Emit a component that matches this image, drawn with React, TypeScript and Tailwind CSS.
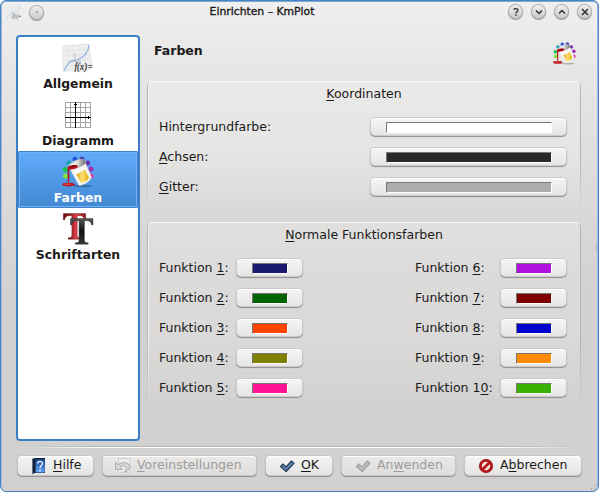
import type { ReactNode } from "react";

function Key({ children }: { children: ReactNode }) {
  return (
    <span className="underline decoration-1 underline-offset-2 [text-decoration-skip-ink:none]">
      {children}
    </span>
  );
}

function PlotIcon({ className }: { className: string }) {
  return (
    <svg viewBox="0 0 32 32" className={`overflow-visible ${className}`}>
      <path d="M1 4 27 2l3 24-6 3H1z" fill="#eeeff0" stroke="#d6d8da" strokeWidth=".6" />
      <path d="M1 9l27-2M1 14l28-2M1 19l28-2M1 24l28-2M6 4v24M11 3v25M17 3l1 25M22 2l2 25" stroke="#d9dbde" strokeWidth=".5" fill="none" />
      <path d="M13 11v9M7 19h12" stroke="#a9adb2" strokeWidth=".8" />
      <path d="M2 29C7 17 11 20 17 17S26 11 27 3" fill="none" stroke="#8fb3e2" strokeWidth="1.2" />
      <text x="12.500" y="27.500" fontSize="11" fontStyle="italic" fontWeight="400" fontFamily="Liberation Serif, serif" textLength="18.500" lengthAdjust="spacingAndGlyphs" fill="#222" stroke="#222" strokeWidth=".2">f(x)=</text>
    </svg>
  );
}

function GridIcon() {
  return (
    <svg viewBox="0 0 32 32" className="size-8" shapeRendering="crispEdges">
      <path d="M3.500 3v26M8.500 3v26M18.500 3v26M23.500 3v26M28.500 3v26M3 3.500h26M3 8.500h26M3 13.500h26M3 23.500h26M3 28.500h26" stroke="#a3a3a3" fill="none" />
      <path d="M13.500 3v26M3 18.500h26M12 5.500h3M26.500 17v3" stroke="#000" fill="none" />
    </svg>
  );
}

function PaintIcon({ id, className }: { id: string; className: string }) {
  const dots: [number, number, string][] = [
    [3.500, 20, "#7ee23a"], [3.200, 13.500, "#16c552"], [7, 7, "#1a9fb4"], [13, 3.200, "#2455d8"],
    [20, 3, "#4b3fb2"], [25.500, 7, "#6732b0"], [29, 13, "#a42fb8"], [29, 20, "#e63394"],
  ];
  return (
    <svg viewBox="0 0 32 32" className={className}>
      <defs>
        <linearGradient id={id + "metal"} x1="0" x2="1">
          <stop offset="0" stopColor="#f6f6f6" />
          <stop offset=".55" stopColor="#ddd" />
          <stop offset="1" stopColor="#666" />
        </linearGradient>
        <linearGradient id={id + "gold"} x1="0" x2="1">
          <stop offset="0" stopColor="#d99d00" />
          <stop offset=".45" stopColor="#ffe27a" />
          <stop offset="1" stopColor="#e3a800" />
        </linearGradient>
      </defs>
      {dots.map(([x, y, c]) => <circle key={c} cx={x} cy={y} r="2.500" fill={c} />)}
      <ellipse cx="21" cy="30" rx="9.500" ry="1.300" fill="#000" opacity=".25" />
      <path d="M8 13 23 6l6.500 15c-1 4-7 8-12.500 8.500z" fill="#f8f8f7" stroke="#c8c8c8" strokeWidth=".4" />
      <path d="m14.500 18.500 8.500-5 4 8.500c-1.500 2.500-4.500 4.500-8 5z" fill={`url(#${id}gold)`} />
      <path d="M5.500 11.500C7 7 16 2 21 3.500s2.500 5-2 7-12 4.500-13.500 1z" fill={`url(#${id}metal)`} stroke="#bbb" strokeWidth=".6" />
      <path d="M5.500 11C8 9 13 8.500 15.500 9.500c1.500.8 0 2.300-2 3s-4.500 1-6.200 1V26H5.800z" fill="#b5121b" />
      <path d="M7 11l6.500-1" stroke="#700008" strokeWidth="1" />
      <ellipse cx="6.500" cy="28.500" rx="6.500" ry="1.900" fill="#b9181c" />
      <path d="M2.500 28.200h6" stroke="#ef7777" strokeWidth=".7" />
    </svg>
  );
}

function FontsIcon() {
  const glyph = "M0 0h21v6h-1.200c-.8-3-1.800-4-4.800-4h-2v18c0 2 .8 2.500 3.500 2.700V24H4.500v-1.300C7.200 22.500 8 22 8 20V2H6C3 2 2 3 1.200 6H0z";
  return (
    <svg viewBox="0 0 32 32" className="size-8">
      <defs>
        <linearGradient id="redT" x1="0" x2="1"><stop offset=".3" stopColor="#7d0f18" /><stop offset=".55" stopColor="#e13d48" /><stop offset="1" stopColor="#8a1720" /></linearGradient>
        <linearGradient id="blackT" x2="0" y2="1"><stop offset="0" stopColor="#555" /><stop offset=".5" stopColor="#111" /><stop offset="1" stopColor="#333" /></linearGradient>
      </defs>
      <path d={glyph} transform="translate(1.300 .5) scale(1.070)" fill="url(#redT)" stroke="#742a30" strokeWidth=".4" />
      <path d={glyph} transform="translate(8.500 5.500) scale(1.070)" fill="url(#blackT)" stroke="#333" strokeWidth=".4" />
    </svg>
  );
}

function HelpBookIcon() {
  return (
    <svg viewBox="0 0 16 16" className="size-4">
      <defs><linearGradient id="book" x2="0" y2="1"><stop offset="0" stopColor="#1d4b92" /><stop offset="1" stopColor="#5fa3f5" /></linearGradient></defs>
      <path d="M1 1 4 0h10v15H4l-3 1z" fill="#0e2038" />
      <path d="M1.500 1.500v14" stroke="#8796a8" strokeWidth=".7" />
      <path d="M4.500 1.300h9.300v13.200H4.500z" fill="url(#book)" />
      <path d="M6.500 5.500c.3-3 5.200-2.800 5 .1C11.400 7.500 9 7.500 9 10.200" fill="none" stroke="#e5f0ff" strokeWidth="1.300" />
      <circle cx="9" cy="12.500" r=".9" fill="#e5f0ff" />
    </svg>
  );
}

function ResetIcon() {
  return (
    <svg viewBox="0 0 16 16" className="size-4">
      <path d="M3.500.5H15v14H4.500l-1-1z" fill="#ececec" stroke="#cfcfcf" />
      <path d="M.5 4.500v7h7L5.300 9.300C7 7.500 10 7.500 11 9.500c.7 1.500 0 3.200-1.500 4 4 0 6-2.700 5.200-5.500C13.500 4 7 3.200 3.200 7z" fill="#d6d6d6" stroke="#a9a9a9" strokeWidth=".9" />
    </svg>
  );
}

function CheckIcon({ off }: { off?: boolean }) {
  return (
    <svg viewBox="0 0 16 16" className="size-4">
      <path d="M1.500 8.500 4 6l3 2.800L12.500 3 15 5.300 7.200 13.500z" fill={off ? "#bcbcbc" : "#5c82ac"} stroke={off ? "#a0a0a0" : "#233c58"} strokeWidth="1.100" strokeLinejoin="round" />
    </svg>
  );
}

function CancelIcon() {
  return (
    <svg viewBox="0 0 16 16" className="size-4">
      <circle cx="8" cy="8" r="5.500" fill="#f6e2e2" stroke="#b51414" strokeWidth="2.600" />
      <path d="m4.500 11.500 7-7" stroke="#b51414" strokeWidth="2.600" />
      <circle cx="8" cy="8" r="6.800" fill="none" stroke="#7e0808" strokeWidth=".5" />
    </svg>
  );
}

function RoundButton({ children }: { children: ReactNode }) {
  return (
    <span className="flex size-[13px] items-center justify-center rounded-full bg-linear-to-b from-[#f0f0f0] to-[#cbcbca] shadow-[0_0_0_1px_#b0b0af,0_1px_1px_1px_#9b9b9a]">
      <svg viewBox="0 0 14 14" className="size-[14px] shrink-0" fill="none" stroke="#303030" strokeWidth="1.500">{children}</svg>
    </span>
  );
}

function Swatch({ color, wide }: { color: string; wide?: boolean }) {
  return (
    <button className={`${wide ? "w-[195px]" : "w-[65px]"} mb-px flex h-[17px] items-end rounded-[4px] bg-linear-to-b from-[#f5f5f5] to-[#e6e5e4] pr-[14px] pb-[2px] pl-[15px] shadow-[0_0_0_1px_#cbcac9,0_1px_1px_1px_#8f8e8d,inset_0_1px_0_#fff]`}>
      <span className="block h-[11px] w-full border border-t-[#777] border-r-white border-b-white border-l-[#777]" style={{ backgroundColor: color }} />
    </button>
  );
}

function Group({ title, className, children }: { title: ReactNode; className: string; children: ReactNode }) {
  return (
    <section className={`relative w-[434px] ${className}`}>
      <div className="pointer-events-none absolute inset-0 rounded-t-[5px] border border-b-0 border-t-white/80 border-r-[#b5b4b3] border-l-[#b5b4b3] bg-white/20 shadow-[inset_1px_0_0_#f3f3f2,1px_0_0_#efefee] [mask-image:linear-gradient(to_bottom,black_60%,transparent)]" />
      <h2 className="relative pt-[5px] text-center leading-4">{title}</h2>
      {children}
    </section>
  );
}

function FunctionRow({ n, color }: { n: number; color: string }) {
  return (
    <div className="flex h-[30px] items-center">
      <span className={n > 5 ? "w-[86px]" : "w-[78px]"}>
        Funktion {n === 10 ? <>1<Key>0</Key></> : <Key>{n}</Key>}:
      </span>
      <Swatch color={color} />
    </div>
  );
}

function DialogButton({ className, icon, off, children }: { className: string; icon: ReactNode; off?: boolean; children: ReactNode }) {
  return (
    <button className={`flex h-[19px] items-center gap-[6px] rounded-[4px] bg-linear-to-b whitespace-nowrap shadow-[0_0_0_1px_#c6c5c4,0_1px_1px_1px_#8f8e8d,inset_0_1px_0_#fff] ${off ? "from-[#eae9e8] to-[#dfdedd] text-[#9c9b9a]" : "from-[#f5f5f5] to-[#e5e4e3]"} ${className}`}>
      {icon}
      <span>{children}</span>
    </button>
  );
}

function NavItem({ icon, label, active }: { icon: ReactNode; label: string; active?: boolean }) {
  return (
    <div className={`flex h-[57px] flex-col items-center pt-[5px] text-[12.4px] leading-4 font-bold ${active ? "rounded-[2px] bg-linear-to-b from-[#61acfc] to-[#4288d2] text-white shadow-[inset_0_0_0_1px_#3f82c8,inset_0_0_0_2px_#70b2f4]" : ""}`}>
      {icon}
      <span className="pt-[2px]">{label}</span>
    </div>
  );
}

const left = ["#191970", "#006400", "#ff4500", "#808000", "#ff1493"];
const right = ["#b010dd", "#800000", "#0000cd", "#ff8c00", "#3cb000"];

export default function App() {
  return (
    <div className="h-[492px] w-[599px] bg-white font-['DejaVu_Sans',sans-serif] text-[12.5px] text-[#1b1918]">
      <div className="relative flex h-full flex-col overflow-hidden rounded-[6px] border border-[#4a83bd] bg-[linear-gradient(to_bottom,#efefef_0,#e4e4e3_90px,#d9d8d7_220px,#d2d1cf_300px,#d2d1cf_100%)] shadow-[inset_0_1px_0_#78a9da,inset_1px_0_0_#9dbbdc,inset_-1px_0_0_#9dbbdc]">
        <header className="flex h-[34px] items-start pt-[3px]">
          <div className="flex w-[160px] items-center gap-[8px] pl-[5px]">
            <PlotIcon className="size-4 opacity-60" />
            <RoundButton><circle cx="7" cy="7" r=".8" fill="#555" stroke="none" /></RoundButton>
          </div>
          <h1 className="flex-1 pr-[146px] text-center text-[10.8px] leading-4 [-webkit-text-stroke:0.35px_#1b1918]">Einrichten – KmPlot</h1>
          <div className="flex gap-[10px] pt-px pr-[7px]">
            <RoundButton><path d="M5 5c.2-2 4.200-2 4 .2C8.900 6.500 7 6.500 7 8.400M7 9.600v1.300" strokeWidth="1.300" /></RoundButton>
            <RoundButton><path d="m4 5.500 3 3 3-3" /></RoundButton>
            <RoundButton><path d="m4 8.500 3-3 3 3" /></RoundButton>
            <RoundButton><path d="m4 4 6 6m0-6-6 6" /></RoundButton>
          </div>
        </header>
        <div className="flex h-[406px] pl-[15px]">
          <nav className="h-[406px] w-[124px] rounded-[4px] border-2 border-[#3c7fc6] bg-white">
            <NavItem icon={<PlotIcon className="size-8" />} label="Allgemein" />
            <NavItem icon={<GridIcon />} label="Diagramm" />
            <NavItem icon={<PaintIcon id="nav" className="size-8" />} label="Farben" active />
            <NavItem icon={<FontsIcon />} label="Schriftarten" />
          </nav>
          <main className="flex flex-col pl-[7px]">
            <div className="flex h-[46px] items-start justify-between pr-[5px] pl-[7px]">
              <span className="pt-[8px] leading-4 font-bold">Farben</span>
              <PaintIcon id="head" className="mt-[7px] size-[23px]" />
            </div>
            <Group title={<><Key>K</Key>oordinaten</>} className="h-[130px]">
              <div className="relative flex flex-col pt-[10px] pr-[15px] pl-[12px]">
                <div className="flex h-[30px] items-center justify-between">Hintergrundfarbe:<Swatch wide color="#ffffff" /></div>
                <div className="flex h-[30px] items-center justify-between"><span><Key>A</Key>chsen:</span><Swatch wide color="#292929" /></div>
                <div className="flex h-[30px] items-center justify-between"><span><Key>G</Key>itter:</span><Swatch wide color="#adadad" /></div>
              </div>
            </Group>
            <Group title={<><Key>N</Key>ormale Funktionsfarben</>} className="mt-[11px] h-[190px]">
              <div className="relative flex justify-between pt-[10px] pr-[15px] pl-[12px]">
                <div>{left.map((c, i) => <FunctionRow key={c} n={i + 1} color={c} />)}</div>
                <div>{right.map((c, i) => <FunctionRow key={c} n={i + 6} color={c} />)}</div>
              </div>
            </Group>
          </main>
        </div>
        <div className="mx-[17px] mt-[5px] h-[2px] shrink-0 bg-linear-to-b from-[#b5b4b3] from-50% to-white to-50% [mask-image:linear-gradient(to_right,transparent,black_15%,black_85%,transparent)]" />
        <footer className="flex pt-[8px] pl-[17px]">
          <DialogButton className="w-[75px] pl-[13px]" icon={<HelpBookIcon />}><Key>H</Key>ilfe</DialogButton>
          <DialogButton off className="ml-[10px] w-[153px] pl-[12px]" icon={<ResetIcon />}><Key>V</Key>oreinstellungen</DialogButton>
          <DialogButton className="ml-[10px] w-[66px] pl-[13px]" icon={<CheckIcon />}><Key>O</Key>K</DialogButton>
          <DialogButton off className="ml-[10px] w-[113px] pl-[13px]" icon={<CheckIcon off />}>An<Key>w</Key>enden</DialogButton>
          <DialogButton className="ml-[10px] w-[116px] pl-[13px]" icon={<CancelIcon />}>A<Key>b</Key>brechen</DialogButton>
        </footer>
        <svg className="absolute top-[242px] right-0 h-[10px] w-[3px]" viewBox="0 0 3 10"><path d="M1 1h1M1 4h1M1 7h1" stroke="#888" /></svg>
        <svg className="absolute right-0 bottom-0 size-[8px]" viewBox="0 0 8 8"><path d="M1 6h1M4 6h1M4 3h1M6 1h1" stroke="#888" /></svg>
      </div>
    </div>
  );
}
